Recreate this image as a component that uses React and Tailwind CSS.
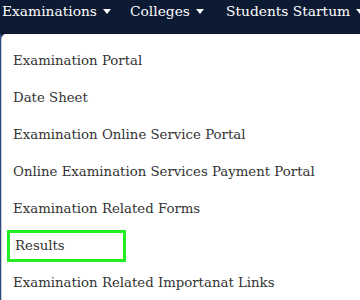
import React from 'react';

const items = [
  'Examination Portal',
  'Date Sheet',
  'Examination Online Service Portal',
  'Online Examination Services Payment Portal',
  'Examination Related Forms',
  'Results',
  'Examination Related Importanat Links',
];

const NavLink = ({ label, className }) => (
  <div className={`flex shrink-0 items-center whitespace-nowrap text-white text-[13.8px] ${className}`}>
    <span>{label}</span>
    <span className="ml-[6px] border-x-[4px] border-t-[5px] border-x-transparent border-t-white" />
  </div>
);

export default function App() {
  return (
    <div className="w-[360px] h-[300px] overflow-hidden bg-[#0c1a33] font-['DejaVu_Serif',serif]">
      <div className="h-[34px] flex items-start pt-[1px] overflow-hidden">
        <NavLink label="Examinations" className="pl-[2px] w-[130px]" />
        <NavLink label="Colleges" className="w-[96px]" />
        <NavLink label="Students Startum" />
      </div>
      <div className="flex h-[266px]">
        <div className="w-[1px] bg-[#2a4a8a]" />
        <div className="flex-1 bg-white rounded-tl-[5px] border-l border-[#c8c8c8] pt-[8px]">
          {items.map((t) => (
            <div key={t} className="h-[37px] flex items-center">
              <div
                className={
                  t === 'Results'
                    ? 'ml-[5px] w-[119px] h-[32px] flex items-center pl-[5px] border-[3px] border-[#22ee22] text-[#333] text-[13.3px]'
                    : 'pl-[11px] text-[#333] text-[13.3px] whitespace-nowrap'
                }
              >
                {t}
              </div>
            </div>
          ))}
        </div>
      </div>
    </div>
  );
}
